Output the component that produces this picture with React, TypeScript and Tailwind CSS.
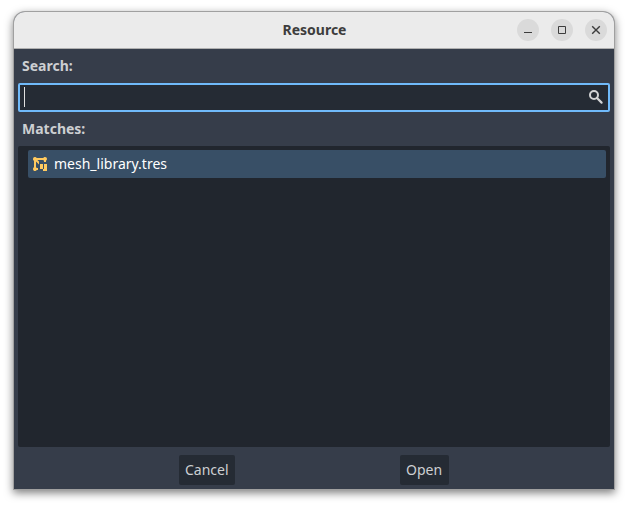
import type { ReactNode } from "react";

function WindowButton({ children }: { children: ReactNode }) {
  return (
    <button className="flex size-[22px] items-center justify-center rounded-full bg-[#dadada]">
      <svg width="22" height="22" viewBox="0 0 22 22" fill="none" stroke="#3d3d3d">
        {children}
      </svg>
    </button>
  );
}

function TitleBar() {
  return (
    <header className="relative flex h-[37px] shrink-0 items-center justify-end border-b border-[#b0b0b0] bg-[#ebebeb] pr-[7px]">
      <h1 className="absolute inset-x-0 top-[8px] pl-px text-center text-[14px] leading-5 font-bold text-[#3d3d3d]">
        Resource
      </h1>
      <div className="flex gap-3">
        <WindowButton>
          <path d="M7 13.5h8" />
        </WindowButton>
        <WindowButton>
          <path d="M7.5 7.5h7v7h-7z" />
        </WindowButton>
        <WindowButton>
          <path d="M7.2 7.2l7.6 7.6M14.8 7.2l-7.6 7.6" strokeWidth="1.4" />
        </WindowButton>
      </div>
    </header>
  );
}

function SearchIcon() {
  return (
    <svg width="16" height="16" viewBox="0 0 16 16" fill="none" stroke="#d2d3d5" strokeWidth="2">
      <circle cx="6" cy="6" r="4" />
      <path d="M9 9l4.6 4.6" strokeWidth="2.2" strokeLinecap="round" />
    </svg>
  );
}

function MeshLibraryIcon() {
  return (
    <svg width="16" height="16" viewBox="0 0 16 16" fill="#ffca5f">
      <path d="M3 1a2 2 0 0 0-1 3.73v6.54A2 2 0 1 0 4.73 14H6v-2H4.73a2 2 0 0 0-.73-.73V5.41l3 3V5.600L5.410 4h5.860a2 2 0 0 0 .730.730V6h2V4.730A2 2 0 1 0 11.270 2H4.730A2 2 0 0 0 3 1z" />
      <path d="M8 8h3v5H8zM12 8h3v7h-4v-2h1z" />
    </svg>
  );
}

function DialogButton({ className, children }: { className: string; children: ReactNode }) {
  return (
    <button className={`h-[30px] rounded-[2px] bg-[#252b34] text-left text-[14px] leading-[30px] text-[#cdcfd2] ${className}`}>
      {children}
    </button>
  );
}

export default function App() {
  return (
    <div className="h-[506px] w-[628px] overflow-hidden bg-white pt-3 pl-[14px] font-['Noto_Sans',sans-serif]">
      <main className="flex h-[477px] w-[600px] flex-col overflow-hidden rounded-t-[11px] bg-[#363d4a] shadow-[0_0_0_1px_#a0a0a0,0_3px_9px_1px_rgba(0,0,0,0.5)]">
        <TitleBar />
        <div className="flex flex-1 flex-col px-1">
          <label className="h-[34px] pl-1 text-[14px] leading-[34px] font-bold text-[#cdcfd2]">Search:</label>
          <div className="flex h-[29px] items-center justify-between rounded-[2px] border-2 border-[#70bafa] bg-[#252b34] pr-1 pb-px pl-1">
            <span className="h-[20px] w-px bg-[#e0e0e0]" />
            <SearchIcon />
          </div>
          <div className="h-[34px] pl-1 text-[14px] leading-[34px] font-bold text-[#cdcfd2]">Matches:</div>
          <div className="h-[301px] rounded-[2px] bg-[#21262e] pt-1 pr-1 pl-[10px]">
            <div className="flex h-7 items-center gap-[6px] rounded-[2px] bg-[#384f66] pl-1 text-[14px] text-white">
              <MeshLibraryIcon />
              <span className="pb-[2px]">mesh_library.tres</span>
            </div>
          </div>
          <footer className="flex pt-2 pl-[161px]">
            <DialogButton className="w-14 pl-[6px]">Cancel</DialogButton>
            <DialogButton className="ml-[165px] w-[49px] pl-[6px]">Open</DialogButton>
          </footer>
        </div>
      </main>
    </div>
  );
}
